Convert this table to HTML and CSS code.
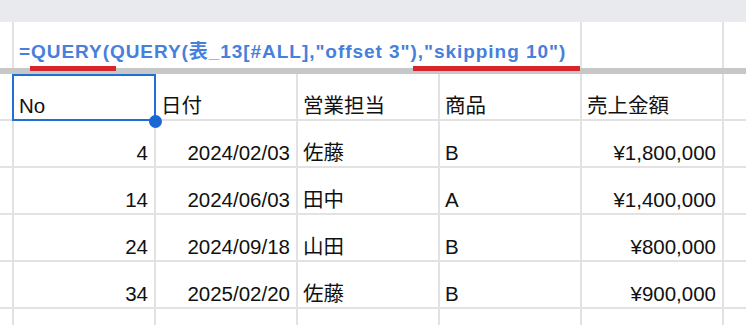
FILE: index.html
```html
<!DOCTYPE html>
<html lang="ja">
<head>
<meta charset="utf-8">
<title>QUERY</title>
<link rel="stylesheet" href="styles.css">
</head>
<body>
<div class="sheet">
  <div class="topband"></div>
  <div class="formula-row">
    <div class="gutter"></div>
    <div class="formula-cell">
      <span class="formula">=<span class="mark m1">QUERY(</span>QUERY(表_13[#ALL],"offset 3")<span class="mark m2">,"skipping 10")</span></span>
    </div>
    <div class="fcell"></div>
    <div class="fcell last"></div>
  </div>
  <div class="divider"></div>
  <div class="grid">
    <div class="gutter"></div>
    <div class="cell selected">No<span class="handle"></span></div>
    <div class="cell">日付</div>
    <div class="cell">営業担当</div>
    <div class="cell">商品</div>
    <div class="cell">売上金額</div>
    <div class="cell last"></div>

    <div class="gutter"></div>
    <div class="cell num">4</div>
    <div class="cell num">2024/02/03</div>
    <div class="cell">佐藤</div>
    <div class="cell">B</div>
    <div class="cell num">¥1,800,000</div>
    <div class="cell last"></div>

    <div class="gutter"></div>
    <div class="cell num">14</div>
    <div class="cell num">2024/06/03</div>
    <div class="cell">田中</div>
    <div class="cell">A</div>
    <div class="cell num">¥1,400,000</div>
    <div class="cell last"></div>

    <div class="gutter"></div>
    <div class="cell num">24</div>
    <div class="cell num">2024/09/18</div>
    <div class="cell">山田</div>
    <div class="cell">B</div>
    <div class="cell num">¥800,000</div>
    <div class="cell last"></div>

    <div class="gutter"></div>
    <div class="cell num">34</div>
    <div class="cell num">2025/02/20</div>
    <div class="cell">佐藤</div>
    <div class="cell">B</div>
    <div class="cell num">¥900,000</div>
    <div class="cell last"></div>

    <div class="gutter tail"></div>
    <div class="cell tail"></div>
    <div class="cell tail"></div>
    <div class="cell tail"></div>
    <div class="cell tail"></div>
    <div class="cell tail"></div>
    <div class="cell tail last"></div>
  </div>
</div>
</body>
</html>
```
FILE: styles.css
```css
html, body {
  margin: 0;
  padding: 0;
  background: #ffffff;
}
body {
  font-family: "Liberation Sans", Arial, "Noto Sans CJK JP", sans-serif;
  color: #111111;
  width: 746px;
  height: 325px;
  overflow: hidden;
}
.sheet {
  display: flex;
  flex-direction: column;
  height: 325px;
}
.topband {
  height: 22px;
  background: #e8eaed;
}
.formula-row {
  display: grid;
  grid-template-columns: 14px 568px 142px 1fr;
  height: 46px;
}
.formula-row .gutter,
.grid .gutter {
  border-right: 2px solid #e2e2e2;
}
.formula-cell {
  border-right: 2px solid #e2e2e2;
  display: flex;
  align-items: flex-end;
  padding: 0 0 6px 5px;
  white-space: nowrap;
  overflow: visible;
  position: relative;
  z-index: 2;
  font-size: 19px;
  line-height: 20px;
}
.fcell {
  border-right: 2px solid #e2e2e2;
}
.fcell.last {
  border-right: none;
}
.formula {
  font-weight: bold;
  font-size: 19px;
  line-height: 20px;
  color: #4680dc;
  letter-spacing: 0.95px;
}
.mark {
  position: relative;
}
.mark::after {
  content: "";
  position: absolute;
  bottom: -9px;
  height: 5px;
  background: #d8252b;
}
.m1::after {
  left: -1px;
  right: -6px;
}
.m2::after {
  left: -5px;
  right: -14px;
}
.divider {
  height: 6px;
  background: #c7c7c7;
}
.grid {
  flex: 1;
  min-height: 0;
  display: grid;
  grid-template-columns: 14px repeat(5, 142px) 1fr;
  grid-template-rows: repeat(5, 47px) 1fr;
}
.grid .gutter {
  border-bottom: 2px solid #e2e2e2;
}
.cell {
  border-right: 2px solid #e2e2e2;
  border-bottom: 2px solid #e2e2e2;
  display: flex;
  align-items: flex-end;
  padding: 0 6px 3px 5px;
  font-size: 20.5px;
  line-height: 20px;
  white-space: nowrap;
  position: relative;
}
.cell.num {
  justify-content: flex-end;
}
.cell.last {
  border-right: none;
}
.grid .tail {
  border-bottom: none;
  padding: 0;
}
.selected::before {
  content: "";
  position: absolute;
  left: -2px;
  top: 0;
  right: -2px;
  bottom: -2px;
  border: 2px solid #1f6fd6;
}
.handle {
  position: absolute;
  right: -8px;
  bottom: -9px;
  width: 13px;
  height: 13px;
  border-radius: 50%;
  background: #1a66d2;
  z-index: 3;
}
```
